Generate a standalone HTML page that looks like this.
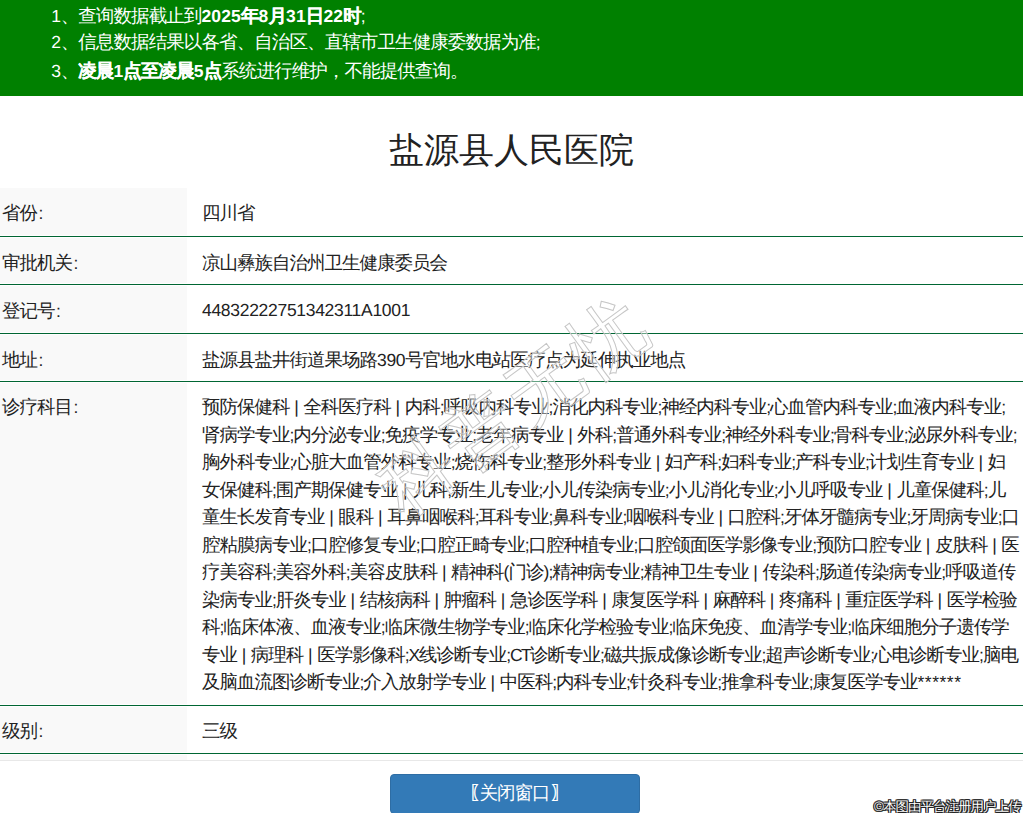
<!DOCTYPE html>
<html><head><meta charset="utf-8">
<style>
*{margin:0;padding:0;box-sizing:border-box}
html,body{width:1023px;height:813px;overflow:hidden;background:#fff}
body{position:relative;font-family:"Liberation Sans",sans-serif;color:#222;text-rendering:geometricPrecision;font-size:17.5px}
i{font-style:normal;font-size:18.5px;letter-spacing:-1px}
u{text-decoration:none;letter-spacing:-0.3px}
b i{letter-spacing:-1px;-webkit-text-stroke:0.1px #fff}
.hdr{position:absolute;left:0;top:0;width:1023px;height:96px;background:#008000;color:#fff}
.hl{position:absolute;left:51.2px;white-space:nowrap;line-height:27.5px}
.title{position:absolute;left:0;top:126px;width:1023px;text-align:center;font-size:35px;line-height:50px}
.title{letter-spacing:0}
.g{position:absolute;left:0;width:187px;background:#f9f9f9}
.ln{position:absolute;left:0;width:1023px;height:1px;background:#006633}
.lab{position:absolute;left:2px;white-space:nowrap;line-height:27.5px}
.val{position:absolute;left:202px;white-space:nowrap;line-height:27.5px}
.btn{position:absolute;left:390px;top:774px;width:250px;height:40px;background:#337ab7;border:1px solid #2e6da4;border-radius:4px}
.wm{position:absolute;left:874px;top:798.5px;font-size:13.5px;line-height:16px;letter-spacing:-1px;color:#fff;white-space:nowrap;text-shadow:1px 0 0 #222,-1px 0 0 #222,0 1px 0 #222,0 -1px 0 #222,1px 1px 0 #222,-1px -1px 0 #222,1px -1px 0 #222,-1px 1px 0 #222}
u.p{letter-spacing:-0.14px}
u.s{letter-spacing:-1.04px}
u.a{letter-spacing:0.52px}
u.r{letter-spacing:-0.85px}
u.x{letter-spacing:-1.6px}
b u{letter-spacing:0.15px}
u.c{padding-left:1.5px}
.bt{position:absolute;left:469px;top:779px;color:#fff;white-space:nowrap;line-height:27.5px}
.hl i{letter-spacing:-0.9px}
.hl b i{letter-spacing:-0.9px}

</style></head><body>
<div class="hdr">
<div class="hl" style="top:2.00px"><u>1</u><i>、查询数据截止到</i><b><u>2025</u><i>年</i><u>8</u><i>月</i><u>31</u><i>日</i><u>22</u><i>时</i></b><u class="s">;</u></div>
<div class="hl" style="top:28.00px"><u>2</u><i>、信息数据结果以各省、自治区、直辖市卫生健康委数据为准</i><u class="s">;</u></div>
<div class="hl" style="top:56.50px"><u>3</u><i>、</i><b><i>凌晨</i><u>1</u><i>点至凌晨</i><u>5</u><i>点</i></b><i>系统进行维护，不能提供查询。</i></div>
</div>
<div class="title">盐源县人民医院</div>
<div class="g" style="top:188px;height:47px"></div>
<div class="lab" style="top:199.00px"><i>省份</i><u class="c">:</u></div>
<div class="val" style="top:199.00px"><i>四川省</i></div>
<div class="ln" style="top:236px"></div>
<div class="g" style="top:238px;height:45px"></div>
<div class="lab" style="top:249.00px"><i>审批机关</i><u class="c">:</u></div>
<div class="val" style="top:249.00px"><i>凉山彝族自治州卫生健康委员会</i></div>
<div class="ln" style="top:284px"></div>
<div class="g" style="top:286px;height:46px"></div>
<div class="lab" style="top:297.00px"><i>登记号</i><u class="c">:</u></div>
<div class="val" style="top:297.00px"><u>44832222751342311A1001</u></div>
<div class="ln" style="top:333px"></div>
<div class="g" style="top:335px;height:45px"></div>
<div class="lab" style="top:346.00px"><i>地址</i><u class="c">:</u></div>
<div class="val" style="top:346.00px"><i>盐源县盐井街道果场路</i><u>390</u><i>号官地水电站医疗点为延伸执业地点</i></div>
<div class="ln" style="top:381px"></div>
<div class="g" style="top:383px;height:321px"></div>
<div class="lab" style="top:393.00px"><i>诊疗科目</i><u class="c">:</u></div>
<div class="val" style="top:393.00px;"><i>预防保健科</i><u class="p"> | </u><i>全科医疗科</i><u class="p"> | </u><i>内科</i><u class="s">;</u><i>呼吸内科专业</i><u class="s">;</u><i>消化内科专业</i><u class="s">;</u><i>神经内科专业</i><u class="s">;</u><i>心血管内科专业</i><u class="s">;</u><i>血液内科专业</i><u class="s">;</u></div>
<div class="val" style="top:420.50px;"><i>肾病学专业</i><u class="s">;</u><i>内分泌专业</i><u class="s">;</u><i>免疫学专业</i><u class="s">;</u><i>老年病专业</i><u class="p"> | </u><i>外科</i><u class="s">;</u><i>普通外科专业</i><u class="s">;</u><i>神经外科专业</i><u class="s">;</u><i>骨科专业</i><u class="s">;</u><i>泌尿外科专业</i><u class="s">;</u></div>
<div class="val" style="top:448.00px;"><i>胸外科专业</i><u class="s">;</u><i>心脏大血管外科专业</i><u class="s">;</u><i>烧伤科专业</i><u class="s">;</u><i>整形外科专业</i><u class="p"> | </u><i>妇产科</i><u class="s">;</u><i>妇科专业</i><u class="s">;</u><i>产科专业</i><u class="s">;</u><i>计划生育专业</i><u class="p"> | </u><i>妇</i></div>
<div class="val" style="top:475.50px;"><i>女保健科</i><u class="s">;</u><i>围产期保健专业</i><u class="p"> | </u><i>儿科</i><u class="s">;</u><i>新生儿专业</i><u class="s">;</u><i>小儿传染病专业</i><u class="s">;</u><i>小儿消化专业</i><u class="s">;</u><i>小儿呼吸专业</i><u class="p"> | </u><i>儿童保健科</i><u class="s">;</u><i>儿</i></div>
<div class="val" style="top:503.00px;"><i>童生长发育专业</i><u class="p"> | </u><i>眼科</i><u class="p"> | </u><i>耳鼻咽喉科</i><u class="s">;</u><i>耳科专业</i><u class="s">;</u><i>鼻科专业</i><u class="s">;</u><i>咽喉科专业</i><u class="p"> | </u><i>口腔科</i><u class="s">;</u><i>牙体牙髓病专业</i><u class="s">;</u><i>牙周病专业</i><u class="s">;</u><i>口</i></div>
<div class="val" style="top:530.50px;"><i>腔粘膜病专业</i><u class="s">;</u><i>口腔修复专业</i><u class="s">;</u><i>口腔正畸专业</i><u class="s">;</u><i>口腔种植专业</i><u class="s">;</u><i>口腔颌面医学影像专业</i><u class="s">;</u><i>预防口腔专业</i><u class="p"> | </u><i>皮肤科</i><u class="p"> | </u><i>医</i></div>
<div class="val" style="top:558.00px;"><i>疗美容科</i><u class="s">;</u><i>美容外科</i><u class="s">;</u><i>美容皮肤科</i><u class="p"> | </u><i>精神科</i><u class="r">(</u><i>门诊</i><u class="r">)</u><u class="s">;</u><i>精神病专业</i><u class="s">;</u><i>精神卫生专业</i><u class="p"> | </u><i>传染科</i><u class="s">;</u><i>肠道传染病专业</i><u class="s">;</u><i>呼吸道传</i></div>
<div class="val" style="top:585.50px;"><i>染病专业</i><u class="s">;</u><i>肝炎专业</i><u class="p"> | </u><i>结核病科</i><u class="p"> | </u><i>肿瘤科</i><u class="p"> | </u><i>急诊医学科</i><u class="p"> | </u><i>康复医学科</i><u class="p"> | </u><i>麻醉科</i><u class="p"> | </u><i>疼痛科</i><u class="p"> | </u><i>重症医学科</i><u class="p"> | </u><i>医学检验</i></div>
<div class="val" style="top:613.00px;"><i>科</i><u class="s">;</u><i>临床体液、血液专业</i><u class="s">;</u><i>临床微生物学专业</i><u class="s">;</u><i>临床化学检验专业</i><u class="s">;</u><i>临床免疫、血清学专业</i><u class="s">;</u><i>临床细胞分子遗传学</i></div>
<div class="val" style="top:640.50px;"><i>专业</i><u class="p"> | </u><i>病理科</i><u class="p"> | </u><i>医学影像科</i><u class="s">;</u><u class="x">X</u><i>线诊断专业</i><u class="s">;</u><u class="x">CT</u><i>诊断专业</i><u class="s">;</u><i>磁共振成像诊断专业</i><u class="s">;</u><i>超声诊断专业</i><u class="s">;</u><i>心电诊断专业</i><u class="s">;</u><i>脑电</i></div>
<div class="val" style="top:668.00px;"><i>及脑血流图诊断专业</i><u class="s">;</u><i>介入放射学专业</i><u class="p"> | </u><i>中医科</i><u class="s">;</u><i>内科专业</i><u class="s">;</u><i>针灸科专业</i><u class="s">;</u><i>推拿科专业</i><u class="s">;</u><i>康复医学专业</i><u class="a">******</u></div>
<div class="ln" style="top:705px"></div>
<div class="g" style="top:707px;height:45px"></div>
<div class="lab" style="top:717.00px"><i>级别</i><u class="c">:</u></div>
<div class="val" style="top:717.00px"><i>三级</i></div>
<div class="ln" style="top:753px"></div>
<div class="g" style="top:755px;height:5px"></div><div class="ln" style="top:760px;background:#e8e8e8"></div><div class="btn"></div><div class="bt"><i style="margin-right:-7px;-webkit-text-stroke:0.5px #fff">〖</i><i>关闭窗口</i><i style="margin-left:2px;-webkit-text-stroke:0.5px #fff">〗</i></div><div class="wm">©本图由平台注册用户上传</div><svg class="dw" width="1023" height="813" style="position:absolute;left:0;top:0"><text x="514" y="406" transform="rotate(-36 514 406)" text-anchor="middle" dominant-baseline="central" font-family="Liberation Sans" font-size="74" fill="rgba(255,255,255,0.4)" stroke="#c6c6c6" stroke-width="1" letter-spacing="4">科普无忧</text></svg>
</body></html>
